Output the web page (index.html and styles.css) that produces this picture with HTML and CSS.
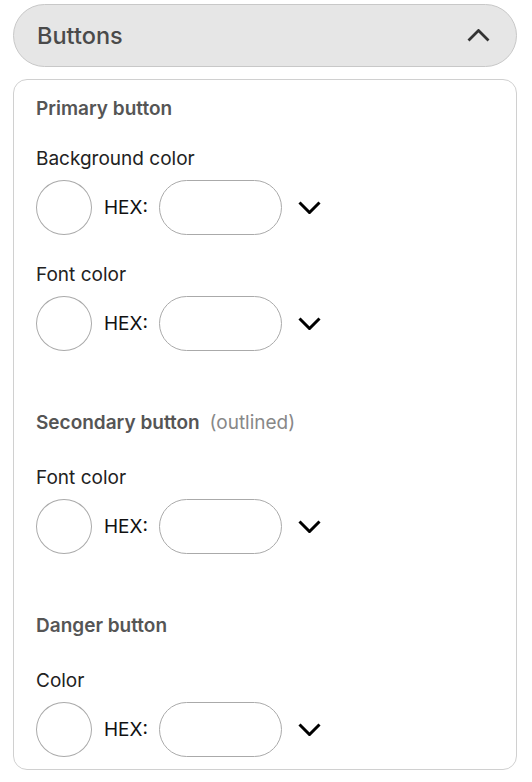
FILE: index.html
```html
<!DOCTYPE html>
<html lang="en">
<head>
    <meta charset="UTF-8">
    <meta name="viewport" content="width=device-width, initial-scale=1.0">
    <title>Buttons</title>
    <link rel="stylesheet" href="styles.css">
</head>
<body>

    <div class="panel">
        <div class="panel-header">
            <span>Buttons</span>
            <svg class="chevron-up" width="23" height="13" viewBox="0 0 23 13">
                <path d="M1.5 11.5 L11.5 1.5 L21.5 11.5" fill="none" stroke="#333" stroke-width="2.8"/>
            </svg>
        </div>

        <div class="panel-body">
            <div class="section">
                <h3>Primary button</h3>
                <div class="field">
                    <label>Background color</label>
                    <div class="color-row">
                        <div class="swatch"></div>
                        <span class="hex-label">HEX:</span>
                        <input class="hex-input" type="text">
                        <svg class="chevron-down" width="23" height="13" viewBox="0 0 23 13">
                            <path d="M1.5 1.5 L11.5 11.5 L21.5 1.5" fill="none" stroke="#000" stroke-width="3"/>
                        </svg>
                    </div>
                </div>
                <div class="field">
                    <label>Font color</label>
                    <div class="color-row">
                        <div class="swatch"></div>
                        <span class="hex-label">HEX:</span>
                        <input class="hex-input" type="text">
                        <svg class="chevron-down" width="23" height="13" viewBox="0 0 23 13">
                            <path d="M1.5 1.5 L11.5 11.5 L21.5 1.5" fill="none" stroke="#000" stroke-width="3"/>
                        </svg>
                    </div>
                </div>
            </div>

            <div class="section">
                <h3>Secondary button <span class="note">(outlined)</span></h3>
                <div class="field">
                    <label>Font color</label>
                    <div class="color-row">
                        <div class="swatch"></div>
                        <span class="hex-label">HEX:</span>
                        <input class="hex-input" type="text">
                        <svg class="chevron-down" width="23" height="13" viewBox="0 0 23 13">
                            <path d="M1.5 1.5 L11.5 11.5 L21.5 1.5" fill="none" stroke="#000" stroke-width="3"/>
                        </svg>
                    </div>
                </div>
            </div>

            <div class="section">
                <h3>Danger button</h3>
                <div class="field">
                    <label>Color</label>
                    <div class="color-row">
                        <div class="swatch"></div>
                        <span class="hex-label">HEX:</span>
                        <input class="hex-input" type="text">
                        <svg class="chevron-down" width="23" height="13" viewBox="0 0 23 13">
                            <path d="M1.5 1.5 L11.5 11.5 L21.5 1.5" fill="none" stroke="#000" stroke-width="3"/>
                        </svg>
                    </div>
                </div>
            </div>
        </div>
    </div>

</body>
</html>
```

FILE: styles.css
```css
* {
    margin: 0;
    padding: 0;
    box-sizing: border-box;
}

body {
    font-family: 'Inter', 'Liberation Sans', sans-serif;
    background-color: #fff;
    color: #222;
}

.panel {
    width: 504px;
    margin: 4px 0 0 13px;
}

/* Cabecera */
.panel-header {
    height: 63px;
    background-color: #e6e6e6;
    border: 1px solid #c8c8c8;
    border-radius: 32px;
    display: flex;
    align-items: center;
    justify-content: space-between;
    padding: 0 26px 0 23px;
    font-size: 23.5px;
    font-weight: 500;
    color: #4a4a4a;
}

.panel-body {
    margin-top: 12px;
    border: 1px solid #d0d0d0;
    border-radius: 14px;
    padding: 17px 22px 12px 22px;
}

.section {
    margin-bottom: 60px;
}

.section:last-child {
    margin-bottom: 0;
}

.section h3 {
    font-size: 19px;
    font-weight: 600;
    color: #555;
    line-height: 24px;
}

.note {
    font-weight: 400;
    color: #888;
    margin-left: 5px;
}

.field {
    margin-top: 26px;
}

.field + .field {
    margin-top: 28px;
}

/* secciones siguientes: un poco más de aire bajo el título */
.section + .section .field {
    margin-top: 31px;
}

.field label {
    display: block;
    font-size: 19px;
    line-height: 24px;
    margin-bottom: 9px;
}

.color-row {
    display: flex;
    align-items: center;
}

.swatch {
    width: 56px;
    height: 55px;
    border: 1px solid #aaa;
    border-radius: 50%;
}

.hex-label {
    font-size: 19px;
    color: #111;
    margin: 0 11px 0 12px;
}

.hex-input {
    width: 123px;
    height: 55px;
    border: 1px solid #aaa;
    border-radius: 28px;
    background: #fff;
}

.chevron-down {
    margin-left: 16px;
}
```
